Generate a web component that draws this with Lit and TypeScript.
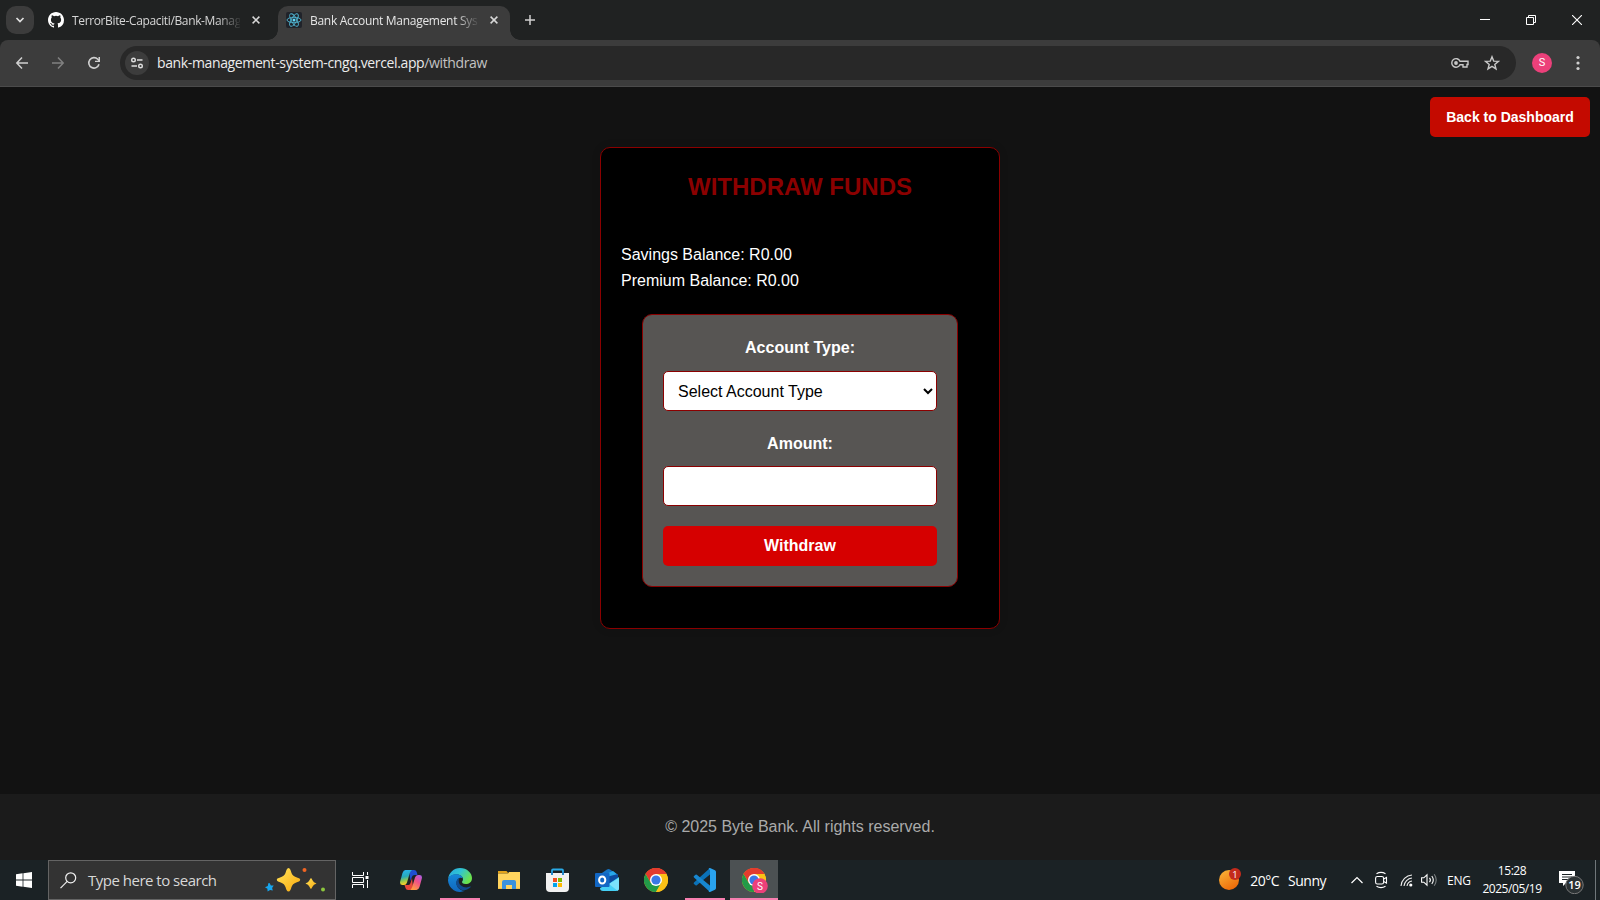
import { LitElement, html, css, svg } from "lit";
import { customElement } from "lit/decorators.js";

const github = html`<svg width="16" height="16" viewBox="0 0 16 16"><path fill="#fff" d="M8 0C3.58 0 0 3.58 0 8c0 3.54 2.29 6.53 5.47 7.59.4.07.55-.17.55-.38 0-.19-.01-.82-.01-1.49-2.01.37-2.53-.49-2.69-.94-.09-.23-.48-.94-.82-1.13-.28-.15-.68-.52-.01-.53.63-.01 1.08.58 1.23.82.72 1.21 1.87.87 2.33.66.07-.52.28-.87.51-1.07-1.78-.2-3.64-.89-3.64-3.95 0-.87.31-1.59.82-2.15-.08-.2-.36-1.02.08-2.12 0 0 .67-.21 2.2.82a7.6 7.6 0 0 1 4 0c1.53-1.04 2.2-.82 2.2-.82.44 1.1.16 1.92.08 2.12.51.56.82 1.27.82 2.15 0 3.07-1.87 3.75-3.65 3.95.29.25.54.73.54 1.48 0 1.07-.01 1.93-.01 2.2 0 .21.15.46.55.38A8.01 8.01 0 0 0 16 8c0-4.42-3.58-8-8-8z"/></svg>`;

const react = html`<svg width="16" height="16" viewBox="0 0 16 16"><rect width="16" height="16" rx="2" fill="#20232a"/><g fill="none" stroke="#4fb4d0" stroke-width=".9"><ellipse cx="8" cy="8" rx="7" ry="2.7"/><ellipse cx="8" cy="8" rx="7" ry="2.7" transform="rotate(60 8 8)"/><ellipse cx="8" cy="8" rx="7" ry="2.7" transform="rotate(120 8 8)"/></g><circle cx="8" cy="8" r="1.5" fill="#61dafb"/></svg>`;

const cross = html`<svg width="8" height="8" viewBox="0 0 8 8"><path d="M.6.6l6.8 6.8M7.4.6L.6 7.4" stroke="#d8d8d8" stroke-width="1.5"/></svg>`;

const chromeShapes = svg`<circle cx="12" cy="12" r="12" fill="#fbc116"/><path d="M12 12L1.6 6A12 12 0 0 1 22.4 6z" fill="#e33b2e"/><path d="M12 6H22.4A12 12 0 0 0 1.6 6L6.8 15z" fill="#e33b2e"/><path d="M1.6 6A12 12 0 0 0 12 24L17.2 15 6.8 15z" fill="#229a48"/><path d="M12 24A12 12 0 0 0 22.4 6H12L17.2 15z" fill="#fbc116"/><circle cx="12" cy="12" r="6" fill="#fff"/><circle cx="12" cy="12" r="4.6" fill="#3a78e7"/>`;
const chrome = html`<svg width="24" height="24" viewBox="0 0 24 24">${chromeShapes}</svg>`;

@customElement("browser-chrome")
export class BrowserChrome extends LitElement {
  static styles = css`
    :host { display: block; height: 87px; background: #202222; font-family: "Open Sans", "Noto Sans", sans-serif; }
    svg { display: block; flex: none; }
    .strip { height: 40px; display: flex; align-items: center; box-sizing: border-box; padding: 0 18px 0 6px; }
    .search { width: 28px; height: 28px; border-radius: 10px; background: #3c3c3c; display: grid; place-items: center; }
    .tab { display: flex; align-items: center; box-sizing: border-box; font-size: 12px; color: #d6d6d6; }
    .tab.first { width: 244px; padding: 0 18px 0 14px; }
    .tab.active { position: relative; width: 232px; height: 34px; align-self: flex-end; background: #3c3c3c; border-radius: 10px 10px 0 0; padding: 0 12px 6px 8px; color: #e6e6e6; }
    .tab.active::before, .tab.active::after { content: ""; position: absolute; bottom: 0; width: 10px; height: 10px; }
    .tab.active::before { left: -10px; background: radial-gradient(circle at 0 0, transparent 9.5px, #3c3c3c 10px); }
    .tab.active::after { right: -10px; background: radial-gradient(circle at 100% 0, transparent 9.5px, #3c3c3c 10px); }
    .name { width: 168px; margin: 0 12px 0 8px; white-space: nowrap; overflow: hidden; letter-spacing: -0.36px; -webkit-mask-image: linear-gradient(90deg, #000 145px, transparent 170px); mask-image: linear-gradient(90deg, #000 145px, transparent 170px); }
    .active .name { letter-spacing: -0.29px; }
    .plus { margin-left: 15px; }
    .controls { margin-left: auto; display: flex; gap: 36px; align-items: center; }
    .bar { height: 47px; box-sizing: border-box; border-bottom: 1px solid #4b4b4b; background: #3c3c3c; border-radius: 8px 8px 0 0; display: flex; align-items: center; padding: 0 18px 0 15px; }
    .nav { display: flex; gap: 22px; }
    .address { width: 1396px; height: 34px; border-radius: 17px; background: #282828; margin-left: 19px; box-sizing: border-box; padding: 0 16px 0 5px; display: flex; align-items: center; }
    .site { width: 24px; height: 24px; border-radius: 50%; background: #3c3c3c; display: grid; place-items: center; margin-right: 8px; }
    .url { font-size: 14px; color: #ececec; letter-spacing: -0.37px; white-space: nowrap; padding-bottom: 1px; }
    .path { color: #c3c3c3; }
    .marks { margin-left: auto; display: flex; gap: 15px; align-items: center; }
    .avatar { width: 20px; height: 20px; border-radius: 50%; background: #ec407a; color: #fff; font: 11px/20px Roboto, sans-serif; text-align: center; margin-left: 16px; }
    .dots { margin-left: auto; }
  `;

  render() {
    return html`
      <div class="strip">
        <div class="search"><svg width="10" height="8" viewBox="0 0 10 8"><path d="M1.5 2L5 5.5 8.5 2" fill="none" stroke="#e0e0e0" stroke-width="1.7"/></svg></div>
        <div class="tab first">${github}<span class="name">TerrorBite-Capaciti/Bank-Manag</span>${cross}</div>
        <div class="tab active">${react}<span class="name">Bank Account Management Sys</span>${cross}</div>
        <svg class="plus" width="10" height="10" viewBox="0 0 10 10"><path d="M5 0v10M0 5h10" stroke="#d0d0d0" stroke-width="1.5"/></svg>
        <div class="controls">
          <svg width="10" height="10" viewBox="0 0 10 10"><path d="M0 4.5h10" stroke="#fff"/></svg>
          <svg width="10" height="10" viewBox="0 0 10 10"><path d="M.5 2.5h7v7h-7zM2.5 2.500V.5h7v7H7.500" fill="none" stroke="#fff"/></svg>
          <svg width="10" height="10" viewBox="0 0 10 10"><path d="M0 0l10 10M10 0L0 10" stroke="#fff" stroke-width="1.1"/></svg>
        </div>
      </div>
      <div class="bar">
        <div class="nav">
          <svg width="14" height="14" viewBox="0 0 14 14"><path d="M13 7H2M7 1.500L1.800 7 7 12.500" fill="none" stroke="#d0d0d0" stroke-width="1.5"/></svg>
          <svg width="14" height="14" viewBox="0 0 14 14"><path d="M1 7h11M7 1.500L12.200 7 7 12.500" fill="none" stroke="#808080" stroke-width="1.5"/></svg>
          <svg width="14" height="14" viewBox="0 0 14 14"><path d="M12 8.300A5.200 5.200 0 1 1 10.800 3.300L12.500 5" fill="none" stroke="#d0d0d0" stroke-width="1.6"/><path d="M13 1v5H8V4.700h3.500V1z" fill="#d0d0d0"/></svg>
        </div>
        <div class="address">
          <div class="site"><svg width="14" height="14" viewBox="0 0 14 14"><g fill="none" stroke="#dedede" stroke-width="1.4"><circle cx="3.500" cy="4" r="1.800"/><circle cx="10.500" cy="10" r="1.800"/><path d="M7 4h5.500M1.500 10H7"/></g></svg></div>
          <span class="url">bank-management-system-cngq.vercel.app<span class="path">/withdraw</span></span>
          <div class="marks">
            <svg width="18" height="12" viewBox="0 0 18 12"><path d="M9 4.200h8v3.300h-1V10h-4V7.700H9A4.300 4.300 0 1 1 9 4.200z" fill="none" stroke="#c8c8c8" stroke-width="1.4"/><circle cx="5" cy="6" r="1.900" fill="#c8c8c8"/></svg>
            <svg width="16" height="16" viewBox="0 0 16 16"><path d="M8 1.800l1.700 4.300 4.700.3-3.600 3 1.200 4.500L8 11.400 4 13.900l1.200-4.500-3.600-3 4.700-.3z" fill="none" stroke="#c8c8c8" stroke-width="1.4"/></svg>
          </div>
        </div>
        <div class="avatar">S</div>
        <svg class="dots" width="8" height="16" viewBox="0 0 8 16"><g fill="#d0d0d0"><circle cx="4" cy="2.500" r="1.600"/><circle cx="4" cy="8" r="1.600"/><circle cx="4" cy="13.500" r="1.600"/></g></svg>
      </div>
    `;
  }
}

@customElement("withdraw-page")
export class WithdrawPage extends LitElement {
  static styles = css`
    :host { display: flex; flex-direction: column; height: 773px; background: #121212; font-family: "Liberation Sans", Arial, sans-serif; color: #fff; }
    .top { height: 60px; box-sizing: border-box; padding: 10px 10px 0; display: flex; justify-content: flex-end; }
    .back { width: 160px; height: 40px; border: 0; border-radius: 5px; background: #c40a00; color: #fff; font: bold 14px "Liberation Sans", Arial, sans-serif; padding: 0; }
    .card { width: 400px; height: 482px; box-sizing: border-box; margin: 0 auto; padding: 20px; border: 1px solid #8b0000; border-radius: 10px; background: #000; box-shadow: 0 0 10px rgba(0, 0, 0, 0.1); }
    h2 { margin: 0 0 36px; font-size: 24px; line-height: 38px; text-align: center; color: #8b0000; }
    p { margin: 0; font-size: 16px; line-height: 26px; }
    form { display: flex; flex-direction: column; box-sizing: border-box; width: 316px; height: 273px; margin: 20px auto 0; padding: 20px; border: 1px solid #8b0000; border-radius: 10px; background: #575553; }
    label { font-weight: bold; font-size: 16px; line-height: 26px; text-align: center; margin-bottom: 10px; }
    select, input { width: 274px; height: 40px; box-sizing: border-box; margin: 0 0 20px; padding: 10px; border: 1px solid #8b0000; border-radius: 5px; background: #fff; color: #000; font: 16px "Liberation Sans", Arial, sans-serif; }
    .second { margin-bottom: 9px; }
    .submit { height: 40px; border: 0; border-radius: 5px; background: #d60000; color: #fff; font: bold 16px "Liberation Sans", Arial, sans-serif; padding: 0; }
    footer { margin-top: auto; height: 66px; box-sizing: border-box; background: #1b1b1b; color: #aaa; font-size: 16px; line-height: 26px; padding: 20px; text-align: center; }
  `;

  render() {
    return html`
      <div class="top"><button class="back">Back to Dashboard</button></div>
      <section class="card">
        <h2>WITHDRAW FUNDS</h2>
        <p>Savings Balance: R0.00</p>
        <p>Premium Balance: R0.00</p>
        <form>
          <label for="type">Account Type:</label>
          <select id="type"><option>Select Account Type</option></select>
          <label class="second" for="amount">Amount:</label>
          <input id="amount" type="number" />
          <button class="submit" type="button">Withdraw</button>
        </form>
      </section>
      <footer>© 2025 Byte Bank. All rights reserved.</footer>
    `;
  }
}

@customElement("task-bar")
export class TaskBar extends LitElement {
  static styles = css`
    :host { display: flex; height: 40px; background: #1b2225; font-family: "Open Sans", "Noto Sans", sans-serif; color: #fff; }
    svg { display: block; flex: none; }
    .cell { width: 48px; height: 40px; display: grid; place-items: center; box-sizing: border-box; }
    .search { width: 288px; height: 40px; box-sizing: border-box; border: 1px solid #646464; background: #333; display: flex; align-items: center; padding: 0 9px 0 11px; }
    .hint { font-size: 15px; color: #d8d8d8; margin-left: 11px; letter-spacing: -0.5px; white-space: nowrap; }
    .spark { margin-left: auto; }
    .apps { display: flex; gap: 1px; margin-left: 3px; }
    .run { background: linear-gradient(#f77fb0, #f77fb0) center bottom / 40px 2px no-repeat; }
    .on { background: linear-gradient(#f77fb0, #f77fb0) center bottom / 48px 2px no-repeat #4c5153; }
    .on svg { margin-left: 2px; }
    .code svg { margin-right: 2px; }
    .tray { margin-left: auto; display: flex; align-items: center; }
    .weather { font-size: 14px; letter-spacing: -0.5px; display: flex; gap: 9px; margin: 0 25px 0 9px; white-space: nowrap; }
    .icons { display: flex; align-items: center; }
    .lang { font-size: 12px; width: 25px; margin-left: 9px; white-space: nowrap; letter-spacing: -0.2px; }
    .clock { width: 60px; margin-left: 10px; font-size: 12px; line-height: 18px; text-align: center; letter-spacing: -0.45px; white-space: nowrap; }
    .note { margin-left: 17px; }
    .edge { width: 1px; height: 40px; background: #70777a; margin: 0 4px 0 11px; }
  `;

  render() {
    return html`
      <div class="cell"><svg width="16" height="16" viewBox="0 0 16 16"><path fill="#fff" d="M0 2.200l6.600-.9v6.300H0zM7.400 1.200L16 0v7.600H7.400zM0 8.400h6.600v6.300L0 13.800zM7.400 8.400H16V16l-8.600-1.200z"/></svg></div>
      <div class="search">
        <svg width="17" height="17" viewBox="0 0 17 17"><g fill="none" stroke="#f0f0f0" stroke-width="1.200"><circle cx="10.700" cy="5.800" r="5"/><path d="M7.200 9.400L.5 16.200"/></g></svg>
        <span class="hint">Type here to search</span>
        <svg class="spark" width="62" height="26" viewBox="0 0 62 26">
          <defs><linearGradient id="gold" x2="1" y2="1"><stop stop-color="#ffe45c"/><stop offset="1" stop-color="#f9a80c"/></linearGradient></defs>
          <path fill="url(#gold)" d="M24.500 1c1.600 0 2.100 2.200 3 5 1 2.200 2 3.100 4.200 4 2.700 1 4.500 1.200 4.500 2.800s-1.800 2-4.500 3c-2.200.9-3.200 1.900-4.200 4.100-.9 2.800-1.400 4.500-3 4.500s-2.100-1.700-3-4.500c-1-2.200-2-3.200-4.200-4.100-2.700-1-4.500-1.400-4.500-3s1.800-1.800 4.500-2.800c2.200-.9 3.200-1.800 4.200-4 .9-2.800 1.400-5 3-5z"/>
          <path fill="url(#gold)" d="M47 11c1.400 1 1.200 4 5.500 5.500-4.300 1.500-4.100 4.500-5.500 5.500-1.400-1-1.200-4-5.500-5.500 4.300-1.500 4.100-4.500 5.500-5.500z"/>
          <path fill="#17a5ed" d="M5.500 16l1.400 2.400 2.800.2-1.600 2.400.7 2.500-2.700-.5-2.500 1.500-.2-2.800-2.400-1.500 2.800-1.200.5-2.700z"/>
          <circle cx="40.500" cy="3" r="2" fill="#f26522"/><circle cx="59" cy="22.500" r="2" fill="#8cc63e"/>
        </svg>
      </div>
      <div class="cell"><svg width="18" height="16" viewBox="0 0 18 16"><path d="M1.500 0v3.500h11V0M1.500 5.500h11v5h-11zM1.500 16v-3.500h11V16M16.500 0v3M16.500 8v8" fill="none" stroke="#fff"/><path d="M14.500 4h3v3h-3z" fill="#fff"/></svg></div>
      <div class="apps">
        <div class="cell"><svg width="22" height="20" viewBox="0 0 22 20">
          <defs><linearGradient id="cpa" x2=".2" y2="1"><stop stop-color="#29b6f6"/><stop offset=".5" stop-color="#28aab8"/><stop offset=".75" stop-color="#8fc850"/><stop offset="1" stop-color="#ffcf28"/></linearGradient><linearGradient id="cpb" x1="1" x2=".4" y2="1"><stop stop-color="#a660ef"/><stop offset=".5" stop-color="#f05088"/><stop offset="1" stop-color="#ff9a45"/></linearGradient></defs>
          <path fill="#1f4fd0" d="M9 0h5q2 0 2.700 2l.8 3h-3q-2 0-2.600 2l-1.400 4z"/>
          <path fill="#e8473b" d="M4.500 15h4q1.500 0 2-2l1.500-5 1 9q-1 3-3 3H8q-2 0-2.500-2z"/>
          <path fill="url(#cpa)" d="M5.500 0H12q-1.500.8-2.200 3L7 12.500Q6.200 15 4 15H2.500Q-.8 15 .3 11L2.500 3Q3.500 0 5.500 0z"/>
          <path fill="url(#cpb)" d="M16.500 20H10q1.500-.8 2.200-3L15 7.500Q15.800 5 18 5h1.500q3.300 0 2.200 4l-2.200 8q-1 3-3 3z"/>
        </svg></div>
        <div class="cell run"><svg width="24" height="24" viewBox="0 0 24 24">
          <defs><linearGradient id="ega" x2="1" y2=".5"><stop stop-color="#28a5df"/><stop offset=".5" stop-color="#30c4d4"/><stop offset="1" stop-color="#6be34c"/></linearGradient><linearGradient id="egb" x2="0" y2="1"><stop stop-color="#1688d8"/><stop offset="1" stop-color="#1067bd"/></linearGradient></defs>
          <path fill="url(#ega)" d="M.1 11A12 12 0 0 1 12 0c7 0 12 5 12 10 0 4-3 6-6.300 6-3 0-3.700-1.300-3.700-2 0-.6 1-1 1-3C15 8.500 12 6.500 8.500 6.500 4.500 6.500 1 8 .1 11z"/>
          <path fill="url(#egb)" d="M0 12.500C0 8 4 6.300 8.300 6.300c3.200 0 6 1.600 6.500 4C12 8.500 8.500 11 8.500 15c0 4.500 4 8 8.500 7.800A12 12 0 0 1 0 12.500z"/>
          <path fill="#114b8d" d="M11.300 9.800C8 11.500 7.300 16 9.600 19c2.900 4 8.400 4.300 12.900.3.500-.5.200-1-.4-.7-5 2.300-11.500-.8-11.400-5.600 0-1.200.3-2.300.6-3.200z"/>
        </svg></div>
        <div class="cell"><svg width="22" height="20" viewBox="0 0 22 20"><path fill="#e2a31b" d="M0 1h8.500l2 2.500H0z"/><path fill="#ffd45e" d="M0 3.500h10l1-1.500h11v17H0z"/><path fill="#3a92dc" d="M4 19v-7q0-2 2-2h10q2 0 2 2v7h-4v-4H8v4z"/><path fill="#f4b93e" d="M0 18.200h4v.8H0zM18 18.200h4v.8h-4z"/></svg></div>
        <div class="cell"><svg width="24" height="24" viewBox="0 0 24 24"><path d="M6 7V2.500Q6 1.500 7 1.500h9q1 0 1 1V7" fill="none" stroke="#29abe8" stroke-width="1.800"/><path fill="#f1f1f1" d="M0 5h23v15q0 4-4 4H4q-4 0-4-4z"/><path d="M6 4v3M17 4v3" stroke="#1480c8" stroke-width="1.800"/><path fill="#f25022" d="M7 10h4v4H7z"/><path fill="#7fba00" d="M12 10h4v4h-4z"/><path fill="#00a4ef" d="M7 15h4v4H7z"/><path fill="#ffb900" d="M12 15h4v4h-4z"/></svg></div>
        <div class="cell"><svg width="24" height="24" viewBox="0 0 24 24"><path fill="#1473c5" d="M4 7l8-5.500q1.500-1 3 0L23 7v5L12 17H4z"/><path fill="#28a8ea" d="M4 9l14-6 5 4-11 9z"/><path fill="#0d4ba0" d="M11 9l12-3v4l-9 6z"/><path fill="#45d0f5" d="M24 9v11q0 3-3 3H8q-3 0-3-3l10-5z"/><path fill="#7be2fa" d="M24 10v10q0 2-1.500 2.800L14 16z"/><rect y="5" width="14.500" height="14" rx="1" fill="#1267c4"/><ellipse cx="7.200" cy="12" rx="3.100" ry="3.500" fill="none" stroke="#fff" stroke-width="2"/></svg></div>
        <div class="cell">${chrome}</div>
        <div class="cell run code"><svg width="24" height="24" viewBox="0 0 24 24"><path fill="#0b72b8" d="M18 0l-16 14.500q-.8.700 0 1.400l1.500 1.300q.6.500 1.300 0L18.500 6z"/><path fill="#1787d0" d="M18 24L2 9.500q-.8-.7 0-1.400l1.500-1.300q.6-.5 1.300 0L18.500 18z"/><path fill="#29a3ef" d="M18 0l5 2.300q1 .5 1 1.600v16.200q0 1.100-1 1.600L18 24q-1 0-1.500-1l1.500-1V2l-1.500-1Q17 0 18 0z"/></svg></div>
        <div class="cell on"><svg width="26" height="26" viewBox="0 0 26 26"><g transform="translate(0 1)">${chromeShapes}</g><circle cx="18" cy="19" r="7.800" fill="#ec407a"/><text x="18" y="22.800" text-anchor="middle" font-family="Roboto" font-size="10" fill="#fff">S</text></svg></div>
      </div>
      <div class="tray">
        <svg width="22" height="24" viewBox="0 0 22 24"><defs><linearGradient id="sun" x2=".6" y2="1"><stop stop-color="#f9b83a"/><stop offset="1" stop-color="#ee6c0a"/></linearGradient></defs><circle cx="10" cy="12" r="10" fill="url(#sun)"/><circle cx="16" cy="6" r="6" fill="#c42b1c"/><text x="16" y="9.500" text-anchor="middle" font-family="Open Sans" font-size="9.500" fill="#fff">1</text></svg>
        <div class="weather"><span>20°C</span><span>Sunny</span></div>
        <div class="icons">
          <svg width="12" height="8" viewBox="0 0 12 8"><path d="M.5 7L6 1.500 11.500 7" fill="none" stroke="#fff" stroke-width="1.200"/></svg>
          <svg width="37" height="18" viewBox="-12 0 37 18"><g fill="none" stroke="#fff" stroke-width="1.100"><rect x=".6" y="5.500" width="8" height="7.500" rx="1.800"/><path d="M8.600 8l2.900-1.500v5.500L8.600 10.500M1.500 2.800Q6 0 10.500 2.800M1.500 15.200Q6 18 10.500 15.200"/></g></svg>
          <svg width="13" height="14" viewBox="0 0 13 14"><g fill="none" stroke="#f0f0f0" stroke-width="1.100"><path d="M1 13A12 12 0 0 1 12 2"/><path d="M4 13A9 9 0 0 1 12 5M7 13A6 6 0 0 1 12 8" /></g><circle cx="10.800" cy="12" r="1.600" fill="#fff"/></svg>
          <svg width="25" height="14" viewBox="-8 0 25 14"><g fill="none" stroke="#fff" stroke-width="1.100"><path d="M.6 4.800h2.200L6 1.800v10.400L2.800 9.200H.6zM8.500 4.800q1.800 2.200 0 4.400M10.800 3q3 4 0 8"/><path d="M13.200 1.300q4 5.700 0 11.400" stroke="#7b8082"/></g></svg>
        </div>
        <span class="lang">ENG</span>
        <div class="clock">15:28<br />2025/05/19</div>
        <svg class="note" width="25" height="28" viewBox="0 0 25 28"><path fill="#fff" d="M0 5h16v12H7l-3 3v-3H0z"/><path d="M3 8.500h10M3 11h10M3 13.500h6" stroke="#1b2225"/><circle cx="15.500" cy="20.500" r="8.700" transform="translate(0 -1.500)" fill="#2b3133" stroke="#777"/><text x="15.500" y="23" text-anchor="middle" font-family="Open Sans" font-weight="600" font-size="11" fill="#fff">19</text></svg>
        <div class="edge"></div>
      </div>
    `;
  }
}

@customElement("app-root")
export class AppRoot extends LitElement {
  static styles = css`
    :host { display: block; width: 1600px; height: 900px; overflow: hidden; }
  `;
  render() {
    return html`<browser-chrome></browser-chrome><withdraw-page></withdraw-page><task-bar></task-bar>`;
  }
}
